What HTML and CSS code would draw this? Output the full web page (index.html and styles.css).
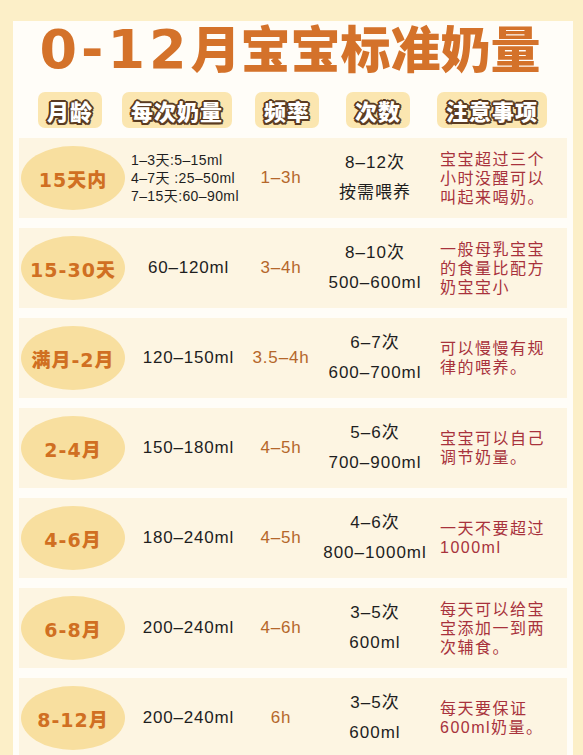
FILE: index.html
```html
<!DOCTYPE html>
<html lang="zh-CN">
<head>
<meta charset="utf-8">
<title>0-12月宝宝标准奶量</title>
<link rel="stylesheet" href="styles.css">
</head>
<body>
<div class="panel">
  <h1 class="title"><span class="title-num">0-12</span>月宝宝标准奶量</h1>
  <div class="head">
    <div class="pill">月龄</div>
    <div class="pill">每次奶量</div>
    <div class="pill">频率</div>
    <div class="pill">次数</div>
    <div class="pill">注意事项</div>
  </div>
  <div class="rows">
    <div class="row">
      <div class="age"><span class="oval">15天内</span></div>
      <div class="amount small">1–3天:5–15ml<br>4–7天 :25–50ml<br>7–15天:60–90ml</div>
      <div class="freq">1–3h</div>
      <div class="times"><span>8–12次</span><span>按需喂养</span></div>
      <div class="note">宝宝超过三个<br>小时没醒可以<br>叫起来喝奶。</div>
    </div>
    <div class="row">
      <div class="age"><span class="oval">15-30天</span></div>
      <div class="amount">60–120ml</div>
      <div class="freq">3–4h</div>
      <div class="times"><span>8–10次</span><span>500–600ml</span></div>
      <div class="note">一般母乳宝宝<br>的食量比配方<br>奶宝宝小</div>
    </div>
    <div class="row">
      <div class="age"><span class="oval">满月-2月</span></div>
      <div class="amount">120–150ml</div>
      <div class="freq">3.5–4h</div>
      <div class="times"><span>6–7次</span><span>600–700ml</span></div>
      <div class="note">可以慢慢有规<br>律的喂养。</div>
    </div>
    <div class="row">
      <div class="age"><span class="oval">2-4月</span></div>
      <div class="amount">150–180ml</div>
      <div class="freq">4–5h</div>
      <div class="times"><span>5–6次</span><span>700–900ml</span></div>
      <div class="note">宝宝可以自己<br>调节奶量。</div>
    </div>
    <div class="row">
      <div class="age"><span class="oval">4-6月</span></div>
      <div class="amount">180–240ml</div>
      <div class="freq">4–5h</div>
      <div class="times"><span>4–6次</span><span>800–1000ml</span></div>
      <div class="note">一天不要超过<br>1000ml</div>
    </div>
    <div class="row">
      <div class="age"><span class="oval">6-8月</span></div>
      <div class="amount">200–240ml</div>
      <div class="freq">4–6h</div>
      <div class="times"><span>3–5次</span><span>600ml</span></div>
      <div class="note">每天可以给宝<br>宝添加一到两<br>次辅食。</div>
    </div>
    <div class="row">
      <div class="age"><span class="oval">8-12月</span></div>
      <div class="amount">200–240ml</div>
      <div class="freq">6h</div>
      <div class="times"><span>3–5次</span><span>600ml</span></div>
      <div class="note">每天要保证<br>600ml奶量。</div>
    </div>
  </div>
</div>
</body>
</html>
```
FILE: styles.css
```css
html, body {
  margin: 0;
  padding: 0;
}
body {
  background: #fcefc8;
  font-family: "Liberation Sans", "Noto Sans CJK SC", sans-serif;
  overflow: hidden;
  height: 755px;
}
.panel {
  margin: 43px 10px 0 13px;
  background: #fffdf8;
  padding: 0 6px 20px 6px;
  height: 760px;
}
.title {
  margin: -22px 0 0 0;
  height: 50px;
  line-height: 50px;
  text-align: center;
  font-family: "Noto Sans CJK SC", sans-serif;
  font-weight: 900;
  font-size: 50px;
  color: #d4722a;
  white-space: nowrap;
  padding-right: 6px;
}
.title-num {
  font-family: "DejaVu Sans", sans-serif;
  font-weight: 700;
  font-size: 54px;
  letter-spacing: 4px;
}
.head {
  margin-top: 21px;
  display: grid;
  grid-template-columns: 84px 133px 91px 91px 111px;
  padding-left: 19px;
}
.pill {
  justify-self: start;
  height: 36px;
  line-height: 36px;
  padding: 0 9px;
  border-radius: 7px;
  background: #fbe6b0;
  font-family: "Noto Sans CJK SC", sans-serif;
  font-weight: 900;
  font-size: 22px;
  letter-spacing: 1px;
  color: #ffffff;
  white-space: nowrap;
  text-shadow:
    2px 0 0 #5a3b22, -2px 0 0 #5a3b22, 0 2px 0 #5a3b22, 0 -2px 0 #5a3b22,
    1.5px 1.5px 0 #5a3b22, -1.5px 1.5px 0 #5a3b22, 1.5px -1.5px 0 #5a3b22, -1.5px -1.5px 0 #5a3b22;
}
.rows {
  margin-top: 10px;
  display: flex;
  flex-direction: column;
  gap: 10px;
}
.row {
  height: 80px;
  background: #fdf5e2;
  display: grid;
  grid-template-columns: 108px 123px 62px 126px 1fr;
  align-items: center;
}
.age {
  display: flex;
  justify-content: center;
}
.oval {
  width: 104px;
  height: 64px;
  border-radius: 50%;
  background: #f8df9f;
  display: flex;
  align-items: center;
  justify-content: center;
  white-space: nowrap;
  font-family: "DejaVu Sans", "Noto Sans CJK SC", sans-serif;
  font-weight: 900;
  font-size: 19px;
  letter-spacing: 1px;
  color: #d06f22;
}
.amount {
  text-align: center;
  font-size: 17px;
  letter-spacing: 0.8px;
  color: #1e1e1e;
  white-space: nowrap;
}
.amount.small {
  text-align: left;
  padding-left: 4px;
  font-size: 14px;
  letter-spacing: 0.4px;
  line-height: 18px;
}
.freq {
  text-align: center;
  font-size: 17px;
  letter-spacing: 0.8px;
  color: #b5672b;
  white-space: nowrap;
}
.times {
  display: flex;
  flex-direction: column;
  align-items: center;
  font-size: 17px;
  letter-spacing: 1px;
  line-height: 30px;
  color: #1e1e1e;
  white-space: nowrap;
}
.note {
  padding-left: 2px;
  font-size: 16px;
  letter-spacing: 1.5px;
  line-height: 19px;
  color: #a8323c;
  white-space: nowrap;
}
```
